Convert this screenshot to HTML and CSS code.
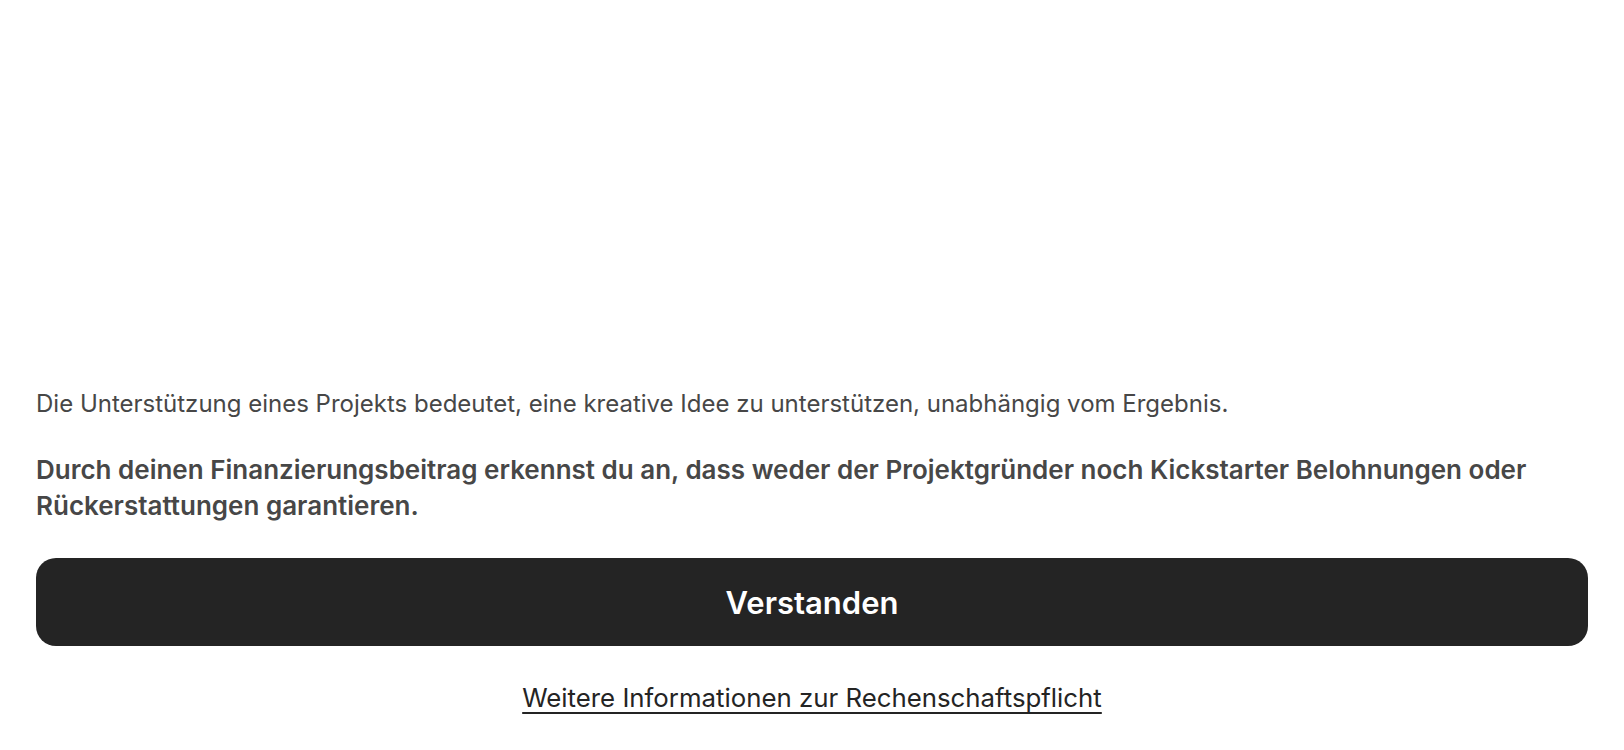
FILE: index.html
```html
<!DOCTYPE html>
<html lang="de">
<head>
<meta charset="utf-8">
<title>Rechenschaftspflicht</title>
<link rel="stylesheet" href="styles.css">
</head>
<body>
<main class="sheet">
  <p class="intro">Die Unterstützung eines Projekts bedeutet, eine kreative Idee zu unterstützen, unabhängig vom Ergebnis.</p>
  <p class="notice">Durch deinen Finanzierungsbeitrag erkennst du an, dass weder der Projektgründer noch Kickstarter Belohnungen oder Rückerstattungen garantieren.</p>
  <button class="confirm" type="button">Verstanden</button>
  <a class="more" href="#">Weitere Informationen zur Rechenschaftspflicht</a>
</main>
</body>
</html>
```

FILE: styles.css
```css
* { box-sizing: border-box; }
html, body { margin: 0; padding: 0; background: #ffffff; }
body { font-family: Inter, "Noto Sans", sans-serif; color: #474747; }
.sheet {
  height: 750px;
  display: flex;
  flex-direction: column;
  justify-content: flex-end;
  padding: 0 36px 36px;
}
.intro {
  margin: 0 0 32px;
  font-size: 24px;
  line-height: 32px;
}
.notice {
  margin: 0 0 34px;
  font-size: 26px;
  line-height: 36px;
  font-weight: 600;
}
.confirm {
  height: 88px;
  border: 0;
  border-radius: 20px;
  background: #242424;
  color: #ffffff;
  font-family: inherit;
  font-size: 31px;
  font-weight: 600;
  margin: 0 0 36px;
}
.more {
  align-self: center;
  font-size: 25.8px;
  line-height: 32px;
  color: #242424;
  text-decoration: underline;
  text-decoration-thickness: 2px;
  text-underline-offset: 5px;
}
```
